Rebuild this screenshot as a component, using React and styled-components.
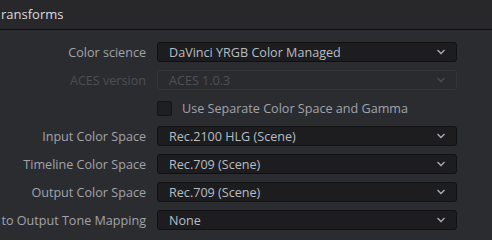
import React from "react";
import styled, { createGlobalStyle } from "styled-components";

const Global = createGlobalStyle`
  html, body {
    margin: 0;
    padding: 0;
    background: #2b2c30;
  }
  body {
    font-family: "Open Sans", "Noto Sans", sans-serif;
    overflow: hidden;
  }
`;

const rows = [
  { label: "Color science", value: "DaVinci YRGB Color Managed" },
  { label: "ACES version", value: "ACES 1.0.3", disabled: true },
  { check: "Use Separate Color Space and Gamma" },
  { label: "Input Color Space", value: "Rec.2100 HLG (Scene)" },
  { label: "Timeline Color Space", value: "Rec.709 (Scene)" },
  { label: "Output Color Space", value: "Rec.709 (Scene)" },
  { label: "Timeline to Output Tone Mapping", value: "None" },
];

const Chevron = ({ dim }) => (
  <svg width="10" height="6" viewBox="0 0 10 6">
    <path
      d="M1.5 1 L5 4.5 L8.5 1"
      fill="none"
      stroke={dim ? "#4a4c50" : "#a9adb3"}
      strokeWidth="1.4"
    />
  </svg>
);

export default function App() {
  return (
    <Page>
      <Global />
      <Header>
        <Title>ransforms</Title>
      </Header>
      <Form>
        {rows.map((r, i) =>
          r.check ? (
            <React.Fragment key={i}>
              <span />
              <CheckRow>
                <Box />
                <CheckLabel>{r.check}</CheckLabel>
              </CheckRow>
            </React.Fragment>
          ) : (
            <React.Fragment key={i}>
              <Label disabled={r.disabled}>{r.label}</Label>
              <Select disabled={r.disabled}>
                <span>{r.value}</span>
                <Chevron dim={r.disabled} />
              </Select>
            </React.Fragment>
          )
        )}
      </Form>
    </Page>
  );
}

const Page = styled.div`
  width: 492px;
  height: 234px;
  background: #2b2c30;
  overflow: hidden;
`;

const Header = styled.div`
  height: 30px;
  box-sizing: border-box;
  background: #28282b;
  border-bottom: 1px solid #0e0e10;
  display: flex;
  align-items: center;
  padding-left: 1px;
`;

const Title = styled.div`
  font-size: 13px;
  color: #dadbde;
  margin-top: -2px;
`;

const Form = styled.div`
  display: grid;
  grid-template-columns: 146px 300px;
  column-gap: 11px;
  row-gap: 8px;
  grid-auto-rows: 20px;
  padding-top: 12px;
`;

const Label = styled.div`
  display: flex;
  justify-content: flex-end;
  align-items: center;
  white-space: nowrap;
  font-size: 12.6px;
  color: ${(p) => (p.disabled ? "#4d4f53" : "#a0a4aa")};
`;

const Select = styled.div`
  display: flex;
  align-items: center;
  justify-content: space-between;
  box-sizing: border-box;
  padding: 0 10px 0 11px;
  border-radius: 3px;
  background: ${(p) => (p.disabled ? "#2a2b2e" : "#1d1d1f")};
  border: 1px solid ${(p) => (p.disabled ? "#35363a" : "#101012")};
  font-size: 12.6px;
  color: ${(p) => (p.disabled ? "#4f5155" : "#b7bdc5")};
  white-space: nowrap;
`;

const CheckRow = styled.div`
  display: flex;
  align-items: center;
  gap: 10px;
`;

const Box = styled.div`
  width: 15px;
  height: 15px;
  box-sizing: border-box;
  border-radius: 2px;
  background: #1f1f21;
  border: 1px solid #141416;
`;

const CheckLabel = styled.div`
  font-size: 12.6px;
  color: #a0a4aa;
  white-space: nowrap;
`;
